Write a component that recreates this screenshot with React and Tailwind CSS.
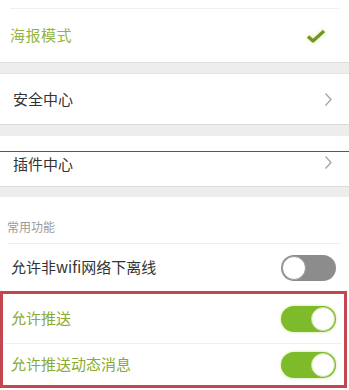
import React from 'react';

const font = { fontFamily: '"Noto Sans CJK SC", "Noto Sans", sans-serif' };

const Toggle = ({ on }) => (
  <div
    className={`relative w-[55px] h-[26px] rounded-full ${on ? 'bg-[#7dbb2a] shadow-[0_0_3px_rgba(160,210,60,0.6)]' : 'bg-[#8c8c8c]'}`}
  >
    <div
      className={`absolute top-[1px] w-[24px] h-[24px] rounded-full bg-white border ${on ? 'right-[1px] border-[#c8dca0]' : 'left-[1px] border-[#9a9a9a]'}`}
    />
  </div>
);

const Chevron = () => (
  <svg width="9" height="15" viewBox="0 0 9 15" className="mr-[16px]">
    <path d="M1.5 1.5 L7 7.5 L1.5 13.5" fill="none" stroke="#a8a8a8" strokeWidth="1.4" />
  </svg>
);

const Gap = ({ h }) => (
  <div className={`${h} bg-[#ededed] border-t border-[#dcdcdc]`} />
);

export default function App() {
  return (
    <div className="w-[349px] h-[390px] overflow-hidden bg-white" style={font}>
      {/* poster mode */}
      <div className="pt-[8px]">
        <div className="mx-[10px] border-t border-[#f0f0f0]" />
        <div className="h-[53px] flex items-center justify-between pl-[10px] pr-[22px]">
          <span className="text-[15px] tracking-[0.5px] text-[#93b443]">海报模式</span>
          <svg width="22" height="16" viewBox="0 0 22 16" style={{ filter: 'drop-shadow(0 0 2px #d8ec9a)' }}>
            <path d="M3 8.5 L8 13 L19 3" fill="none" stroke="#74942a" strokeWidth="3.2" strokeLinejoin="round" />
          </svg>
        </div>
      </div>

      <Gap h="h-[11px]" />

      <div className="h-[51px] flex items-center justify-between pl-[13px] border-t border-[#e4e4e4]">
        <span className="text-[15px] text-[#333]">安全中心</span>
        <Chevron />
      </div>

      <Gap h="h-[12px]" />

      <div className="relative h-[50px] flex items-center justify-between pl-[13px] pt-[2px]">
        <div className="absolute left-0 right-0 top-[15px] h-[1px] bg-[#8e3f3f]" />
        <span className="text-[15px] text-[#333] mt-[4px]">插件中心</span>
        <Chevron />
      </div>

      <Gap h="h-[11px]" />

      <div className="h-[46px] flex items-center pl-[7px] pt-[14px]">
        <span className="text-[12px] text-[#9a9a9a]">常用功能</span>
      </div>
      <div className="mx-[8px] border-t border-[#efefef]" />

      <div className="h-[47px] flex items-center justify-between pl-[11px] pr-[13px]">
        <span className="text-[15px] text-[#333]">允许非wifi网络下离线</span>
        <Toggle on={false} />
      </div>

      <div className="w-[347px] h-[97px] border-[3px] border-[#c4464e] flex flex-col">
        <div className="h-[49px] flex items-center justify-between pl-[8px] pr-[8px]">
          <span className="text-[15px] text-[#8aaa30]">允许推送</span>
          <Toggle on />
        </div>
        <div className="mx-[2px] border-t border-[#efefef]" />
        <div className="flex-1 flex items-center justify-between pl-[8px] pr-[8px]">
          <span className="text-[15px] text-[#8aaa30]">允许推送动态消息</span>
          <Toggle on />
        </div>
      </div>
    </div>
  );
}
